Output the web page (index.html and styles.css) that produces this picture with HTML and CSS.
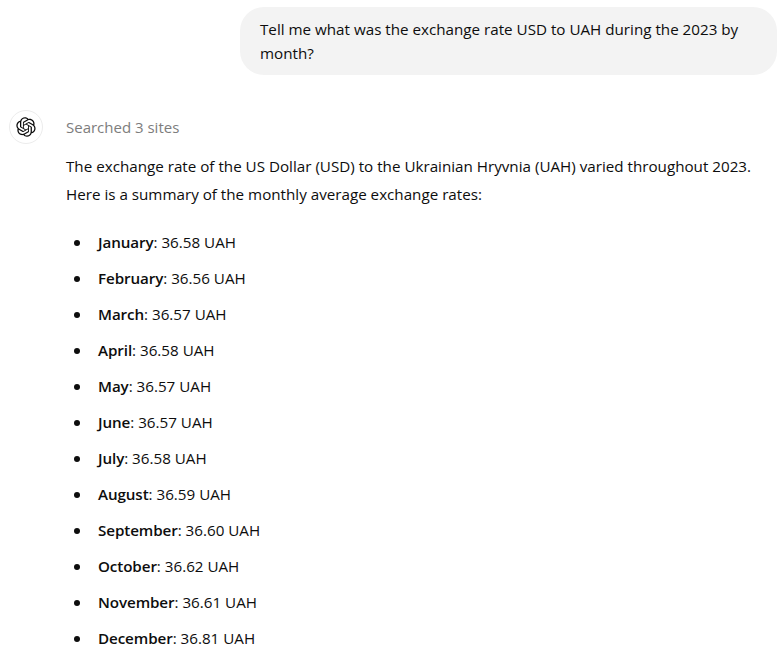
FILE: index.html
```html
<!DOCTYPE html>
<html>
<head>
<title>Exchange rate chat</title>
<link rel="stylesheet" href="styles.css">
</head>
<body>
<div class="chat">
<div class="user-row">
<div class="bubble">Tell me what was the exchange rate USD to UAH during the 2023 by month?</div>
</div>
<div class="answer-row">
<div class="avatar">
<svg viewBox="0 0 41 41" width="20" height="20"><path fill="#0d0d0d" d="M37.5324 16.8707C37.9808 15.5241 38.1363 14.0974 37.9886 12.6859C37.8409 11.2744 37.3934 9.91076 36.676 8.68622C35.6126 6.83404 33.9882 5.3676 32.0373 4.4985C30.0864 3.62941 27.9098 3.40259 25.8215 3.85078C24.8796 2.7893 23.7219 1.94125 22.4257 1.36341C21.1295 0.785575 19.7249 0.491269 18.3058 0.500197C16.1708 0.495044 14.0893 1.16803 12.3614 2.42214C10.6335 3.67624 9.34853 5.44666 8.6917 7.47815C7.30085 7.76286 5.98686 8.3414 4.8377 9.17505C3.68854 10.0087 2.73073 11.0782 2.02839 12.312C0.956464 14.1591 0.498905 16.2988 0.721698 18.4228C0.944492 20.5467 1.83612 22.5449 3.268 24.1293C2.81966 25.4759 2.66413 26.9026 2.81182 28.3141C2.95951 29.7256 3.40701 31.0892 4.12437 32.3138C5.18791 34.1659 6.8123 35.6322 8.76321 36.5013C10.7141 37.3704 12.8907 37.5973 14.9789 37.1492C15.9208 38.2107 17.0786 39.0587 18.3747 39.6366C19.6709 40.2144 21.0755 40.5087 22.4946 40.4998C24.6307 40.5054 26.7133 39.8321 28.4418 38.5772C30.1704 37.3223 31.4556 35.5506 32.1119 33.5179C33.5027 33.2332 34.8167 32.6547 35.9659 31.821C37.115 30.9874 38.0728 29.9178 38.7752 28.684C39.8458 26.8371 40.3023 24.6979 40.0789 22.5748C39.8556 20.4517 38.9639 18.4544 37.5324 16.8707ZM22.4978 37.8849C20.7443 37.8874 19.0459 37.2733 17.6994 36.1501C17.7601 36.117 17.8666 36.0586 17.936 36.0161L25.9004 31.4156C26.1003 31.3019 26.2663 31.137 26.3813 30.9378C26.4964 30.7386 26.5563 30.5124 26.5549 30.2825V19.0542L29.9213 20.998C29.9389 21.0068 29.9541 21.0198 29.9656 21.0359C29.977 21.052 29.9842 21.0707 29.9867 21.0902V30.3889C29.9842 32.375 29.1946 34.2791 27.7909 35.6841C26.3872 37.0892 24.4838 37.8806 22.4978 37.8849ZM6.39227 31.0064C5.51397 29.4888 5.19742 27.7107 5.49804 25.9832C5.55718 26.0187 5.66048 26.0818 5.73461 26.1244L13.699 30.7248C13.8975 30.8408 14.1233 30.902 14.3532 30.902C14.583 30.902 14.8088 30.8408 15.0073 30.7248L24.731 25.1103V28.9979C24.7321 29.0177 24.7283 29.0376 24.7199 29.0556C24.7115 29.0736 24.6988 29.0893 24.6829 29.1012L16.6317 33.7497C14.9096 34.7416 12.8643 35.0097 10.9447 34.4954C9.02506 33.9811 7.38785 32.7263 6.39227 31.0064ZM4.29707 13.6194C5.17156 12.0998 6.55279 10.9364 8.19885 10.3327C8.19885 10.4013 8.19491 10.5228 8.19491 10.6071V19.808C8.19351 20.0378 8.25334 20.2638 8.36823 20.4629C8.48312 20.6619 8.64893 20.8267 8.84863 20.9404L18.5723 26.5542L15.206 28.4979C15.1894 28.5089 15.1703 28.5155 15.1505 28.5173C15.1307 28.5191 15.1107 28.516 15.0924 28.5082L7.04046 23.8557C5.32135 22.8601 4.06716 21.2235 3.55289 19.3046C3.03862 17.3858 3.30624 15.3413 4.29707 13.6194ZM31.955 20.0556L22.2312 14.4411L25.5976 12.4981C25.6142 12.4872 25.6333 12.4805 25.6531 12.4787C25.6729 12.4769 25.6928 12.4801 25.7111 12.4879L33.7631 17.1364C34.9967 17.849 36.0017 18.8982 36.6606 20.1613C37.3194 21.4244 37.6047 22.849 37.4832 24.2684C37.3617 25.6878 36.8382 27.0432 35.9743 28.1759C35.1103 29.3086 33.9415 30.1717 32.6047 30.6641C32.6047 30.5947 32.6047 30.4733 32.6047 30.3889V21.188C32.6066 20.9586 32.5474 20.7328 32.4332 20.5338C32.319 20.3348 32.154 20.1698 31.955 20.0556ZM35.3055 15.0128C35.2464 14.9765 35.1431 14.9142 35.069 14.8717L27.1045 10.2712C26.906 10.1554 26.6803 10.0943 26.4504 10.0943C26.2206 10.0943 25.9948 10.1554 25.7963 10.2712L16.0726 15.8858V11.9982C16.0715 11.9783 16.0753 11.9585 16.0837 11.9405C16.0921 11.9225 16.1048 11.9068 16.1207 11.8949L24.1719 7.25025C25.4053 6.53903 26.8158 6.19376 28.2383 6.25482C29.6608 6.31589 31.0364 6.78077 32.2044 7.59508C33.3723 8.40939 34.2842 9.53945 34.8334 10.8531C35.3826 12.1667 35.5464 13.6095 35.3055 15.0128ZM14.2424 21.9419L10.8752 19.9981C10.8576 19.9893 10.8423 19.9763 10.8309 19.9602C10.8195 19.9441 10.8122 19.9254 10.8098 19.9058V10.6071C10.8107 9.18295 11.2173 7.78848 11.9819 6.58696C12.7466 5.38544 13.8377 4.42659 15.1275 3.82264C16.4173 3.21869 17.8524 2.99464 19.2649 3.1767C20.6775 3.35876 22.0089 3.93941 23.1034 4.85067C23.0427 4.88379 22.937 4.94215 22.8668 4.98473L14.9024 9.58517C14.7025 9.69878 14.5366 9.86356 14.4215 10.0626C14.3065 10.2616 14.2466 10.4877 14.2479 10.7175L14.2424 21.9419ZM16.071 17.9991L20.4018 15.4978L24.7325 17.9975V22.9985L20.4018 25.4983L16.071 22.9985V17.9991Z"/></svg>
</div>
<div class="answer">
<div class="searched">Searched 3 sites</div>
<p class="intro">The exchange rate of the US Dollar (USD) to the Ukrainian Hryvnia (UAH) varied throughout 2023. Here is a summary of the monthly average exchange rates:</p>
<ul class="rates">
<li><span><b>January</b>: 36.58 UAH</span></li>
<li><span><b>February</b>: 36.56 UAH</span></li>
<li><span><b>March</b>: 36.57 UAH</span></li>
<li><span><b>April</b>: 36.58 UAH</span></li>
<li><span><b>May</b>: 36.57 UAH</span></li>
<li><span><b>June</b>: 36.57 UAH</span></li>
<li><span><b>July</b>: 36.58 UAH</span></li>
<li><span><b>August</b>: 36.59 UAH</span></li>
<li><span><b>September</b>: 36.60 UAH</span></li>
<li><span><b>October</b>: 36.62 UAH</span></li>
<li><span><b>November</b>: 36.61 UAH</span></li>
<li><span><b>December</b>: 36.81 UAH</span></li>
</ul>
</div>
</div>
</div>
</body>
</html>
```
FILE: styles.css
```css
html, body {
  height: 100%;
  overflow: hidden;
}
body {
  margin: 0;
  background: #fff;
  color: #0d0d0d;
  font-family: "Open Sans", "Noto Sans", sans-serif;
  font-size: 15.2px;
  line-height: 24px;
}
.chat {
  display: flex;
  flex-direction: column;
}
.user-row {
  display: flex;
  justify-content: flex-end;
  padding-top: 7px;
}
.bubble {
  width: 497px;
  padding: 10px 20px;
  background: #f3f3f3;
  border-radius: 24px;
}
.answer-row {
  display: flex;
  margin-top: 35px;
  padding-left: 9px;
  gap: 23px;
}
.avatar {
  flex: none;
  width: 32px;
  height: 32px;
  display: flex;
  align-items: center;
  justify-content: center;
  border: 1px solid #ececec;
  border-radius: 50%;
}
.answer {
  flex: 1;
  min-width: 0;
}
.searched {
  color: #7d7d7d;
  font-size: 15px;
  height: 24px;
  margin-top: 5px;
}
.intro {
  margin: 13px 0 0;
  line-height: 28px;
}
.rates {
  list-style: none;
  margin: 16px 0 0;
  padding: 0 0 0 8px;
}
.rates li {
  display: flex;
  align-items: center;
  gap: 18px;
  height: 36px;
  line-height: 36px;
}
.rates li::before {
  content: "";
  flex: none;
  width: 6px;
  height: 6px;
  margin-top: 1px;
  border-radius: 50%;
  background: #0d0d0d;
}
.rates b {
  font-weight: 600;
  letter-spacing: -0.1px;
}
```
